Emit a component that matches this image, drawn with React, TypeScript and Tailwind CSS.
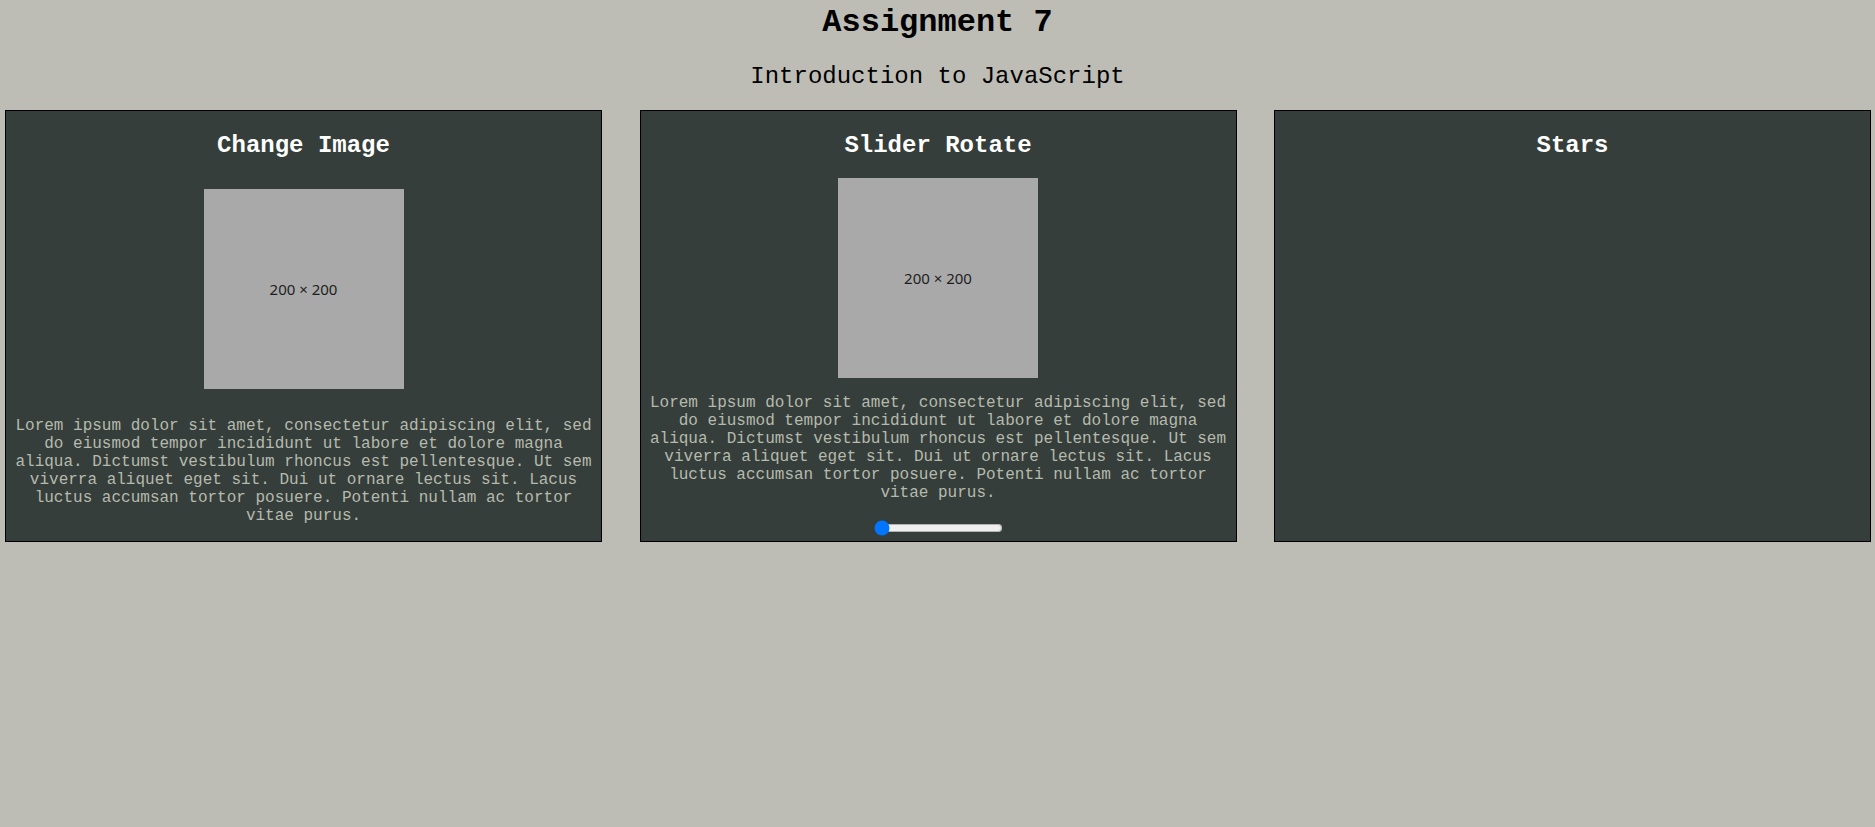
const lorem =
  'Lorem ipsum dolor sit amet, consectetur adipiscing elit, sed do eiusmod tempor incididunt ut labore et dolore magna aliqua. Dictumst vestibulum rhoncus est pellentesque. Ut sem viverra aliquet eget sit. Dui ut ornare lectus sit. Lacus luctus accumsan tortor posuere. Potenti nullam ac tortor vitae purus.';

function Placeholder() {
  return (
    <div className="w-[200px] h-[200px] shrink-0 bg-[#a9a9a9] flex items-center justify-center text-[15px] text-[#1e1e1e] font-['Noto_Sans',sans-serif]">
      200 × 200
    </div>
  );
}

function Card({ title, children }: { title: string; children?: React.ReactNode }) {
  return (
    <div className="w-[597px] bg-[#353e3a] border border-black flex flex-col items-center px-[8px]">
      <h2 className="mt-[21px] mb-[19px] text-[24px] leading-[27px] font-bold text-white">{title}</h2>
      {children}
    </div>
  );
}

export default function App() {
  return (
    <div className="min-h-screen bg-[#bebdb5] font-['Liberation_Mono','Courier_New',monospace] text-black">
      <h1 className="pt-[5px] text-center text-[32px] leading-[36px] font-bold">Assignment 7</h1>
      <h2 className="mt-[22px] text-center text-[24px] leading-[27px]">Introduction to JavaScript</h2>

      <div className="mt-[20px] flex justify-between items-stretch pl-[5px] pr-[4px]">
        {/* Change Image */}
        <Card title="Change Image">
          <div className="mt-[11px]">
            <Placeholder />
          </div>
          <p className="mt-[28px] mb-[16px] text-center text-[16px] leading-[18px] text-[#b6baae]">{lorem}</p>
        </Card>

        {/* Slider Rotate */}
        <Card title="Slider Rotate">
          <Placeholder />
          <p className="mt-[16px] text-center text-[16px] leading-[18px] text-[#b6baae]">{lorem}</p>
          <input type="range" min={0} max={360} defaultValue={0} className="mt-[18px] w-[129px] h-[16px]" />
        </Card>

        {/* Stars */}
        <Card title="Stars" />
      </div>
    </div>
  );
}
